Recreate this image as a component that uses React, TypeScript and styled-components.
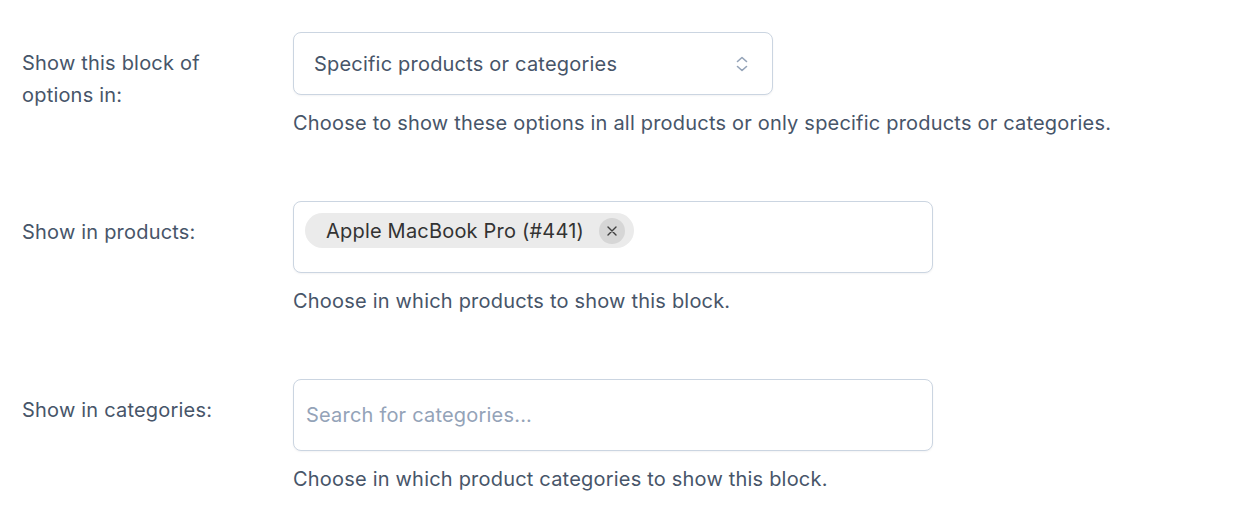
import React from "react";
import styled, { createGlobalStyle } from "styled-components";

const Global = createGlobalStyle`
  html, body { margin: 0; padding: 0; background: #ffffff; }
  body { font-family: Inter, "Noto Sans", sans-serif; -webkit-font-smoothing: antialiased; letter-spacing: 0.2px; }
`;

const Page = styled.div`
  display: flex;
  flex-direction: column;
  gap: 63px;
  padding: 32px 22px 0 22px;
`;

const Row = styled.div`
  display: grid;
  grid-template-columns: 271px 1fr;
  align-items: start;
`;

const Label = styled.div`
  padding-top: 15px;
  width: 200px;
  font-size: 20px;
  line-height: 32px;
  color: #475569;
`;

const Field = styled.div`
  display: flex;
  flex-direction: column;
`;

const Box = styled.div<{ $width: number; $height: number; $padX: number }>`
  box-sizing: border-box;
  width: ${(p) => p.$width}px;
  min-height: ${(p) => p.$height}px;
  border: 1px solid #cbd5e1;
  border-radius: 8px;
  background: #fff;
  box-shadow: 0 1px 2px rgba(15, 23, 42, 0.05);
  padding: 0 ${(p) => p.$padX}px;
  display: flex;
  align-items: center;
  font-size: 20px;
  color: #475569;
`;

const SelectBox = styled(Box)`
  padding-right: 22px;
`;

const TagBox = styled(Box)`
  align-items: flex-start;
  padding-top: 11px;
`;

const SelectText = styled.span`
  flex: 1;
`;

const Placeholder = styled.span`
  color: #94a3b8;
`;

const Chip = styled.span`
  display: inline-flex;
  align-items: center;
  height: 35px;
  padding: 0 9px 0 21px;
  border-radius: 18px;
  background: #ebebeb;
  color: #333333;
  font-size: 20px;
  gap: 15px;
`;

const ChipClose = styled.span`
  display: inline-flex;
  align-items: center;
  justify-content: center;
  width: 26px;
  height: 26px;
  border-radius: 50%;
  background: #d6d6d6;
  color: #444;
`;

const Help = styled.p`
  margin: 13px 0 0 0;
  font-size: 20px;
  line-height: 30px;
  color: #475569;
`;

const Chevrons = () => (
  <svg width="16" height="22" viewBox="0 0 16 22" fill="none" stroke="#94a3b8" strokeWidth="1.6" strokeLinecap="round" strokeLinejoin="round">
    <path d="M3.5 8.5 L8 4.5 L12.5 8.5" />
    <path d="M3.5 13.5 L8 17.5 L12.5 13.5" />
  </svg>
);

const XIcon = () => (
  <svg width="12" height="12" viewBox="0 0 12 12" fill="none" stroke="#3f3f3f" strokeWidth="1.4" strokeLinecap="round">
    <path d="M2 2 L10 10 M10 2 L2 10" />
  </svg>
);

export default function App() {
  return (
    <>
      <Global />
      <Page>
        <Row>
          <Label>Show this block of options in:</Label>
          <Field>
            <SelectBox $width={480} $height={63} $padX={20}>
              <SelectText>Specific products or categories</SelectText>
              <Chevrons />
            </SelectBox>
            <Help>Choose to show these options in all products or only specific products or categories.</Help>
          </Field>
        </Row>
        <Row>
          <Label>Show in products:</Label>
          <Field>
            <TagBox $width={640} $height={72} $padX={11}>
              <Chip>
                Apple MacBook Pro (#441)
                <ChipClose>
                  <XIcon />
                </ChipClose>
              </Chip>
            </TagBox>
            <Help>Choose in which products to show this block.</Help>
          </Field>
        </Row>
        <Row>
          <Label>Show in categories:</Label>
          <Field>
            <Box $width={640} $height={72} $padX={12}>
              <Placeholder>Search for categories...</Placeholder>
            </Box>
            <Help>Choose in which product categories to show this block.</Help>
          </Field>
        </Row>
      </Page>
    </>
  );
}
